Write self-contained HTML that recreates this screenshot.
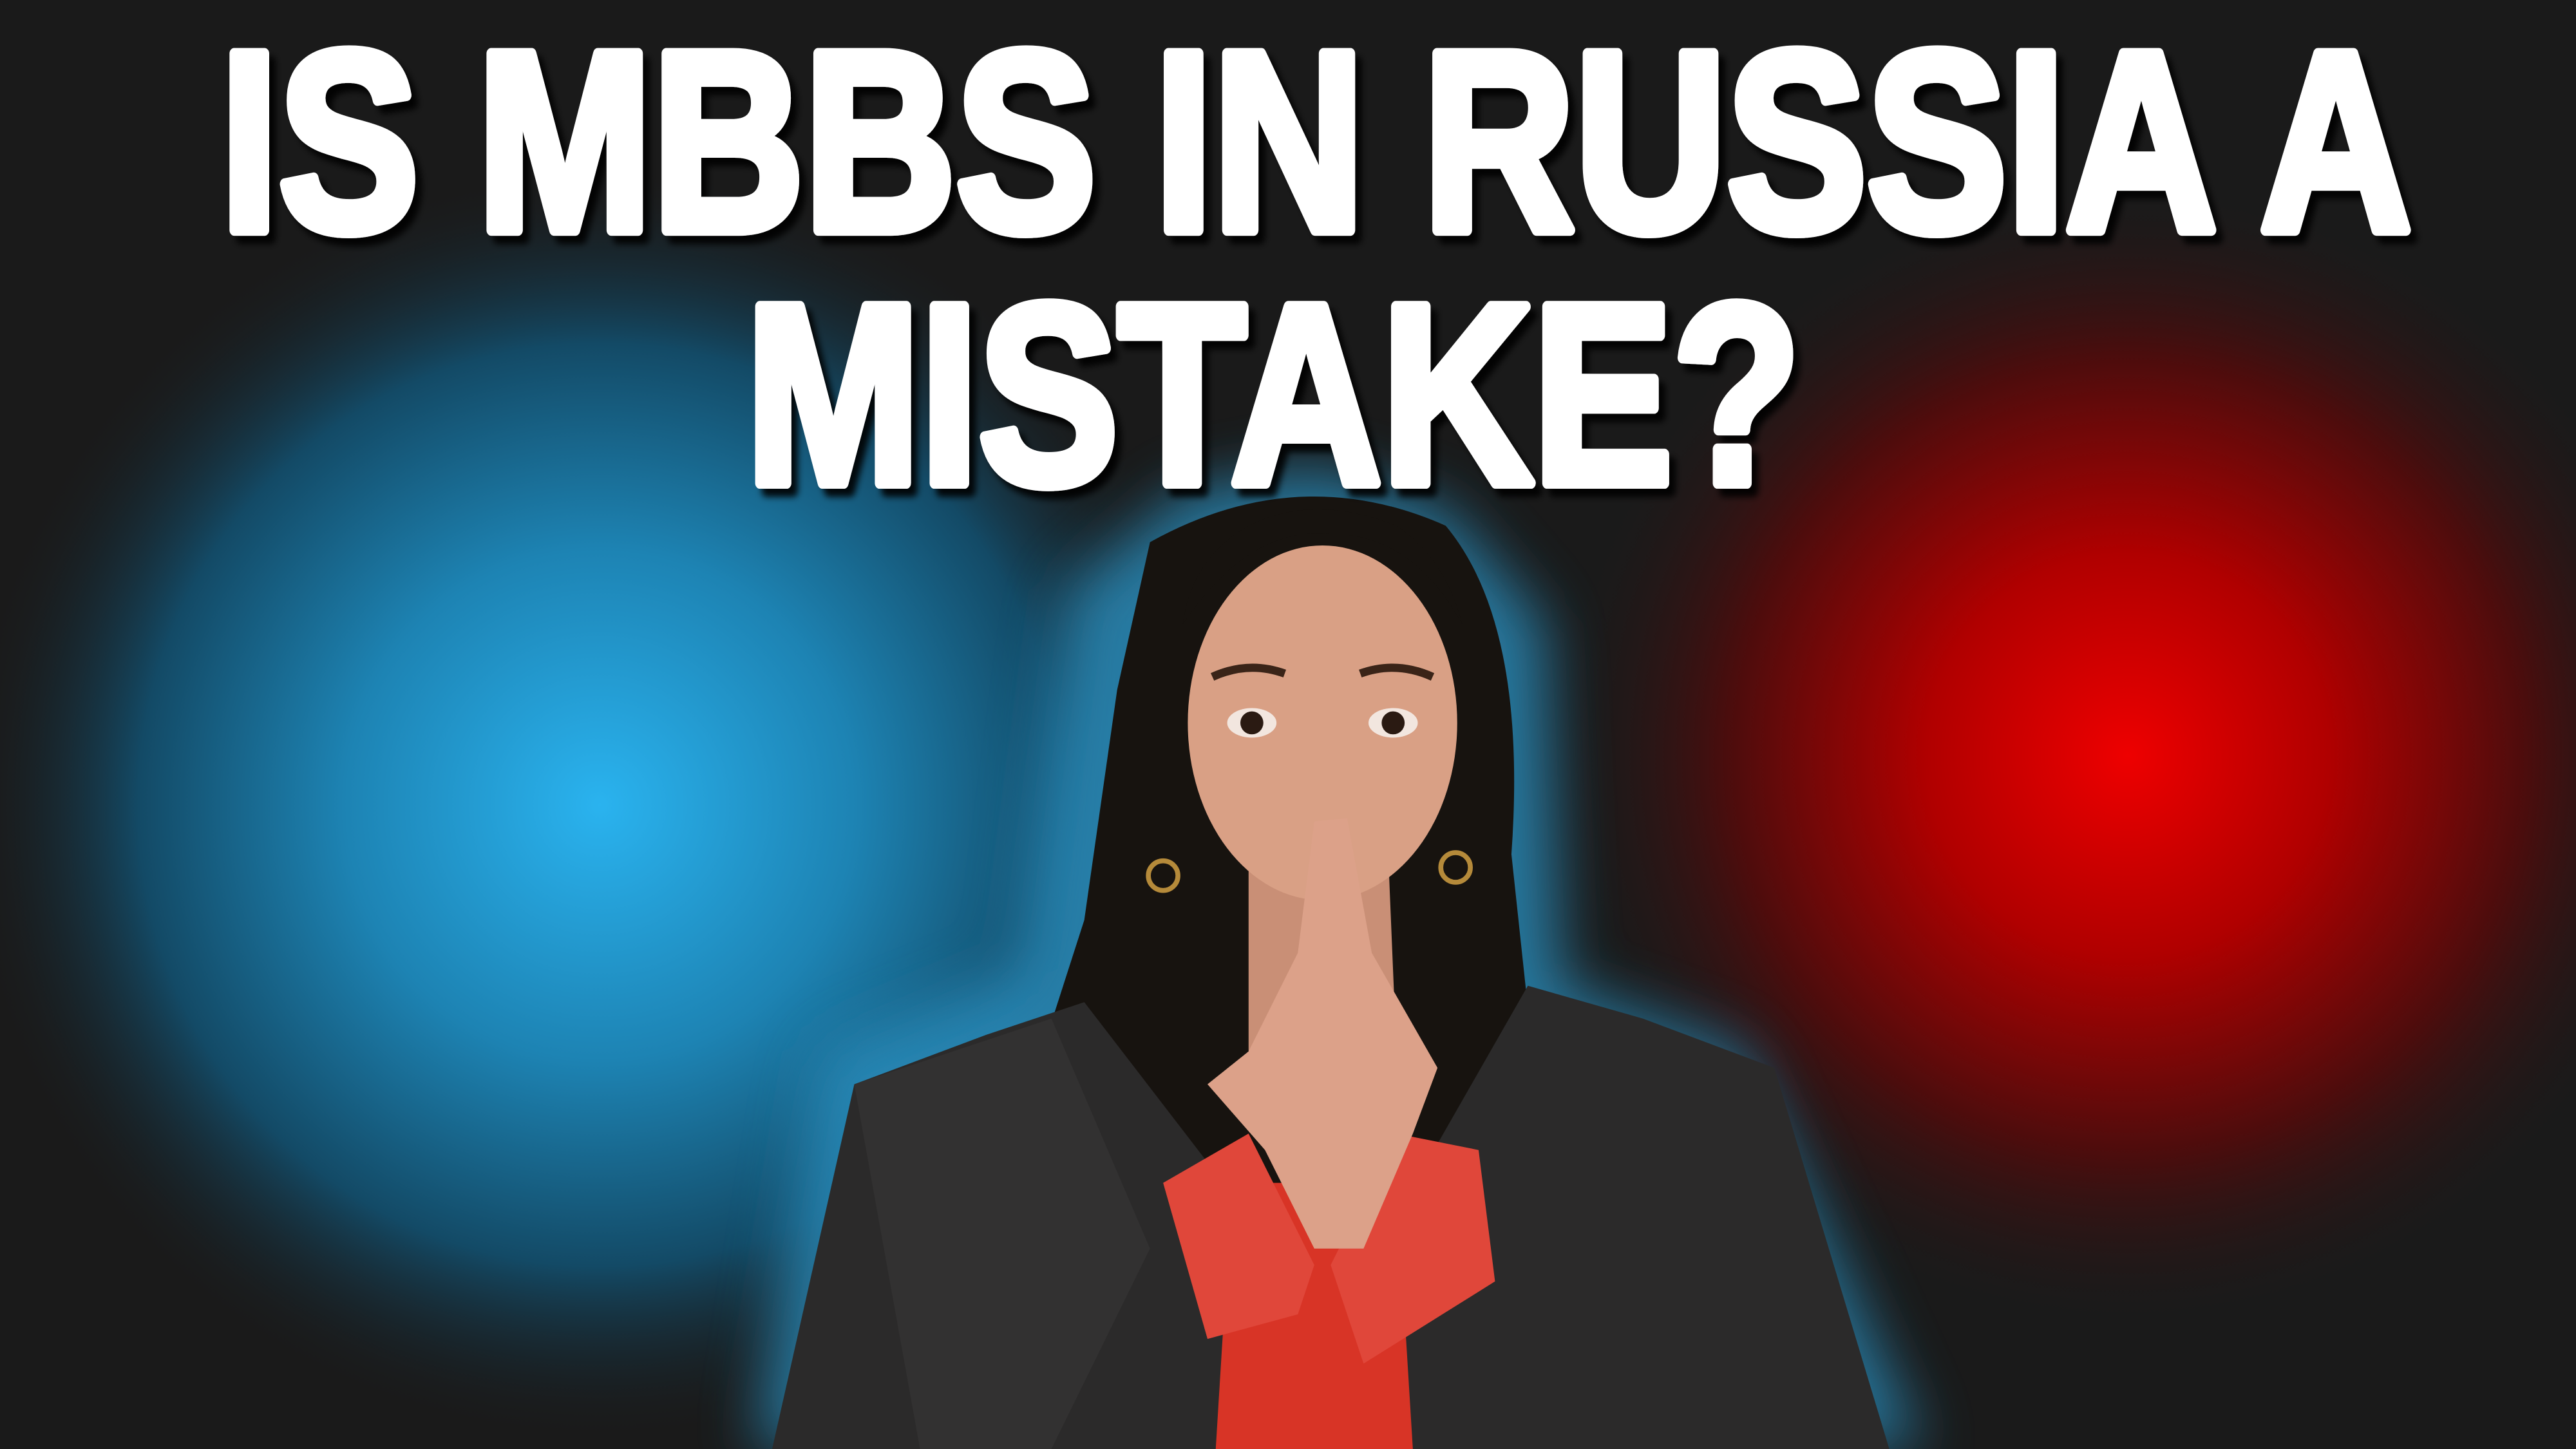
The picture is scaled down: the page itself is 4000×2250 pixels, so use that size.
<!DOCTYPE html>
<html><head><meta charset="utf-8"><style>
html,body{margin:0;padding:0;background:#1a1a1a;}
svg{display:block}
</style></head><body>
<svg width="4000" height="2250" viewBox="0 0 1568 882" preserveAspectRatio="none" xmlns="http://www.w3.org/2000/svg">
<defs>
<radialGradient id="bl" cx="365" cy="490" r="390" gradientUnits="userSpaceOnUse">
<stop offset="0" stop-color="#2ab3ef"/><stop offset="0.4" stop-color="#1d83b3"/><stop offset="0.72" stop-color="#134a66"/><stop offset="1" stop-color="#1a1a1a" stop-opacity="0"/>
</radialGradient>
<radialGradient id="rd" cx="1295" cy="460" r="350" gradientUnits="userSpaceOnUse">
<stop offset="0" stop-color="#ee0000"/><stop offset="0.35" stop-color="#b00000"/><stop offset="0.7" stop-color="#4a0d0d"/><stop offset="1" stop-color="#1a1a1a" stop-opacity="0"/>
</radialGradient>
<filter id="b" x="-50%" y="-50%" width="200%" height="200%"><feGaussianBlur stdDeviation="18"/></filter>
<filter id="s" x="-10%" y="-10%" width="120%" height="130%"><feDropShadow dx="4" dy="5" stdDeviation="2" flood-color="#000" flood-opacity="0.9"/></filter>
</defs>
<rect width="1568" height="882" fill="#1a1a1a"/>
<rect width="1568" height="882" fill="url(#bl)"/>
<rect width="1568" height="882" fill="url(#rd)"/>
<path d="M460 882 L500 640 L620 590 L650 360 L720 300 L800 285 L880 310 L940 380 L950 600 L1060 640 L1170 882 Z" fill="#2a90c0" opacity="0.8" filter="url(#b)"/>
<path d="M700 330 Q790 280 880 320 Q930 380 920 520 L935 660 L900 720 L640 760 L615 700 L660 560 L680 420 Z" fill="#17130f"/>
<path d="M470 882 L520 660 L600 630 L660 610 L760 740 L800 882 Z" fill="#2b2a2a"/>
<path d="M1150 882 L1080 650 L1000 620 L930 600 L850 740 L800 882 Z" fill="#2b2a2a"/>
<path d="M520 660 L640 620 L700 760 L640 882 L560 882 Z" fill="#323131"/>
<path d="M760 520 L845 520 L850 640 L760 640 Z" fill="#c98f76"/>
<ellipse cx="805" cy="440" rx="82" ry="108" fill="#d9a085"/>
<path d="M720 380 Q760 320 810 325 Q860 325 890 380 Q880 340 850 320 Q800 300 760 320 Q725 340 720 380Z" fill="#17130f"/>
<path d="M738 412 Q760 402 782 410" stroke="#3a2418" stroke-width="5" fill="none"/>
<path d="M828 410 Q850 402 872 412" stroke="#3a2418" stroke-width="5" fill="none"/>
<ellipse cx="762" cy="440" rx="15" ry="9" fill="#f2e6df"/><circle cx="762" cy="440" r="7" fill="#2a1a12"/>
<ellipse cx="848" cy="440" rx="15" ry="9" fill="#f2e6df"/><circle cx="848" cy="440" r="7" fill="#2a1a12"/>
<circle cx="708" cy="533" r="9" fill="none" stroke="#b58a3a" stroke-width="3"/>
<circle cx="886" cy="528" r="9" fill="none" stroke="#b58a3a" stroke-width="3"/>
<path d="M750 720 L850 720 L860 882 L740 882 Z" fill="#d83426"/>
<path d="M708 720 L760 690 L800 770 L790 800 L735 815 Z" fill="#e0473a"/>
<path d="M900 700 L850 690 L810 770 L830 830 L910 780 Z" fill="#e0473a"/>
<path d="M800 500 L820 498 L835 580 L875 650 L860 690 L830 760 L800 760 L770 700 L735 660 L760 640 L790 580 Z" fill="#dca189"/>
<g filter="url(#s)" fill="#ffffff" stroke="#ffffff" stroke-width="7" stroke-linejoin="round" font-family="Liberation Sans, DejaVu Sans, sans-serif" font-weight="bold">
<text x="134" y="140" font-size="156" textLength="1334" lengthAdjust="spacingAndGlyphs">IS MBBS IN RUSSIA A</text>
<text x="454" y="294" font-size="156" textLength="642" lengthAdjust="spacingAndGlyphs">MISTAKE?</text>
</g>
</svg>
</body></html>
